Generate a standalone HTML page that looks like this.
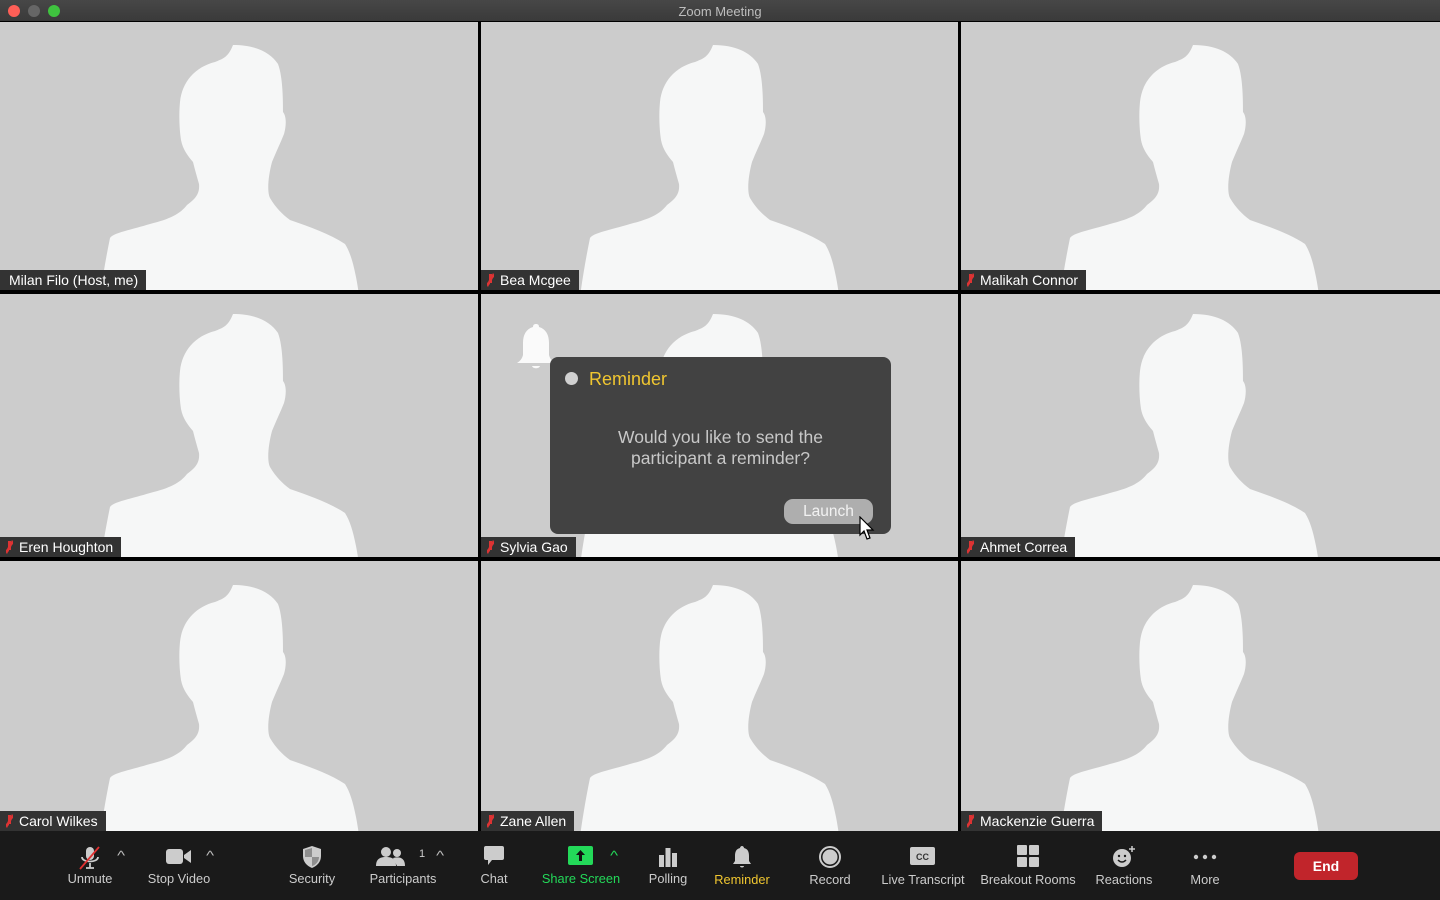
<!DOCTYPE html>
<html><head><meta charset="utf-8"><style>
*{margin:0;padding:0;box-sizing:border-box}
body{width:1440px;height:900px;background:#000;position:relative;overflow:hidden;font-family:"Liberation Sans",sans-serif}
.title{position:absolute;left:0;top:0;width:1440px;height:21px;background:linear-gradient(#474747,#3a3a3a);color:#bdbdbd;font-size:13px;text-align:center;line-height:23px}
.dot{position:absolute;top:5px;width:12px;height:12px;border-radius:50%}
.tile{position:absolute;background:#cccccc;overflow:hidden}
.tile svg{position:absolute;left:0;top:0}
.lab{position:absolute;left:0;bottom:0;height:20px;background:#333;color:#fff;font-size:14px;line-height:21px;padding:0 8px 0 9px;white-space:nowrap}
.lab.m{padding-left:19px}
.lab.m:before{content:"";position:absolute;left:6px;top:3px;width:7px;height:14px;background:linear-gradient(120deg,transparent 40%,#d33 40%,#d33 60%,transparent 60%),linear-gradient(#d33,#d33) 2px 1px/3px 9px no-repeat;border-radius:2px}
.bar{position:absolute;left:0;top:831px;width:1440px;height:69px;background:#1a1a1a}
.it{position:absolute;top:0;height:69px;text-align:center;color:#ccc;font-size:12.8px}
.it svg{position:absolute;top:14px;left:50%;transform:translateX(-50%)}
.it span{position:absolute;top:40px;left:50%;transform:translateX(-50%);white-space:nowrap}
.car{position:absolute;top:17px;color:#bbb;font-size:13px;transform:scaleX(1.3)}
</style></head><body>
<div class="title">Zoom Meeting
<div class="dot" style="left:8px;background:#fe5f57"></div>
<div class="dot" style="left:28px;background:#666"></div>
<div class="dot" style="left:48px;background:#3fc33f"></div>
</div>
<svg width="0" height="0" style="position:absolute"><defs><path id="sil" d="M233 23 C255 23 270 30 278 42 C283 55 283 80 283 90 C287 95 286 105 284 112 C280 122 276 130 272 140 C268 155 267 170 270 176 C276 186 282 192 290 198 C310 205 330 212 345 222 C350 230 353 240 356 255 C359 270 361 290 362 300 L97 300 C99 280 103 250 110 216 C113 211 130 208 150 202 C170 197 180 192 187 183 C195 177 200 172 199 162 C197 155 195 148 193 140 C188 134 183 128 181 118 C179 105 179 90 180 80 C182 60 195 45 215 40 C222 37 228 36 233 23 Z" fill="#f6f7f7"/></defs></svg>

<div class="tile" style="left:0;top:22px;width:478px;height:268px"><svg width="478" height="268"><use href="#sil"/></svg><div class="lab" style="padding-left:9px">Milan Filo (Host, me)</div></div>
<div class="tile" style="left:481px;top:22px;width:477px;height:268px"><svg width="477" height="268"><use href="#sil" x="-1"/></svg><div class="lab m">Bea Mcgee</div></div>
<div class="tile" style="left:961px;top:22px;width:479px;height:268px"><svg width="479" height="268"><use href="#sil" x="-1"/></svg><div class="lab m">Malikah Connor</div></div>

<div class="tile" style="left:0;top:294px;width:478px;height:263px"><svg width="478" height="263"><use href="#sil" y="-3"/></svg><div class="lab m">Eren Houghton</div></div>
<div class="tile" style="left:481px;top:294px;width:477px;height:263px"><svg width="477" height="263"><use href="#sil" x="-1" y="-3"/></svg><div class="lab m">Sylvia Gao</div></div>
<div class="tile" style="left:961px;top:294px;width:479px;height:263px"><svg width="479" height="263"><use href="#sil" x="-1" y="-3"/></svg><div class="lab m">Ahmet Correa</div></div>

<div class="tile" style="left:0;top:561px;width:478px;height:270px"><svg width="478" height="270"><use href="#sil" y="1"/></svg><div class="lab m">Carol Wilkes</div></div>
<div class="tile" style="left:481px;top:561px;width:477px;height:270px"><svg width="477" height="270"><use href="#sil" x="-1" y="1"/></svg><div class="lab m">Zane Allen</div></div>
<div class="tile" style="left:961px;top:561px;width:479px;height:270px"><svg width="479" height="270"><use href="#sil" x="-1" y="1"/></svg><div class="lab m">Mackenzie Guerra</div></div>

<svg style="position:absolute;left:516px;top:323px" width="40" height="48"><path d="M20 1 C22 1 23 2 23 4 C30 6 33 12 33 20 L33 32 C34 36 36 38 39 40 L1 40 C4 38 6 36 7 32 L7 20 C7 12 10 6 17 4 C17 2 18 1 20 1Z" fill="#fafafa"/><path d="M16 43 L24 43 C23 46 17 46 16 43Z" fill="#fafafa"/></svg>
<div style="position:absolute;left:550px;top:357px;width:341px;height:177px;background:#424242;border-radius:8px">
<div style="position:absolute;left:15px;top:15px;width:13px;height:13px;border-radius:50%;background:#d0d0d0"></div>
<div style="position:absolute;left:39px;top:12px;color:#f0c630;font-size:18px">Reminder</div>
<div style="position:absolute;left:0;width:341px;top:70px;text-align:center;color:#c8c8c8;font-size:17.5px;line-height:21px">Would you like to send the<br>participant a reminder?</div>
<div style="position:absolute;left:234px;top:142px;width:89px;height:25px;border-radius:9px;background:#aeaeae;color:#f2f2f2;font-size:15.5px;text-align:center;line-height:25px">Launch</div>
</div>
<svg style="position:absolute;left:859px;top:516px" width="18" height="26"><path d="M1 1 L1 19 L5 15 L8 23 L11 22 L8 14 L14 14 Z" fill="#fff" stroke="#000" stroke-width="1.2"/></svg>

<div class="bar">
<div class="it" style="left:60px;width:60px"><svg width="26" height="26" viewBox="0 0 26 26"><rect x="9" y="2" width="8" height="13" rx="4" fill="#ccc"/><path d="M5 12 C5 18 21 18 21 12 M13 18 V23 M9 23 H17" stroke="#ccc" stroke-width="1.8" fill="none"/><path d="M3 24 L22 2" stroke="#e03030" stroke-width="1.8"/></svg><span>Unmute</span></div>
<div class="car" style="left:118px">^</div>
<div class="it" style="left:144px;width:70px"><svg width="26" height="20" viewBox="0 0 26 20" style="top:16px"><rect x="0" y="2" width="17" height="15" rx="3" fill="#ccc"/><path d="M18 8 L25 3 V16 L18 11Z" fill="#ccc"/></svg><span>Stop Video</span></div>
<div class="car" style="left:207px">^</div>
<div class="it" style="left:282px;width:60px"><svg width="20" height="24" viewBox="0 0 20 24"><path d="M10 1 L19 4 V11 C19 17 15 21 10 23 C5 21 1 17 1 11 V4Z" fill="#ccc"/><path d="M10 3 V12 H3 V5Z M10 12 H17 C17 16 14 20 10 21Z" fill="#1a1a1a" opacity=".35"/></svg><span>Security</span></div>
<div class="it" style="left:365px;width:76px"><svg width="30" height="22" viewBox="0 0 30 22" style="left:26px;top:15px"><circle cx="10" cy="6" r="5" fill="#ccc"/><path d="M0 20 C0 13 4 11 10 11 C16 11 20 13 20 20Z" fill="#ccc"/><circle cx="21" cy="7" r="4" fill="#ccc"/><path d="M17 12 C25 10 29 13 29 20 H21Z" fill="#ccc"/></svg><span>Participants</span><div style="position:absolute;left:54px;top:17px;color:#ccc;font-size:11px">1</div></div>
<div class="car" style="left:437px">^</div>
<div class="it" style="left:470px;width:48px"><svg width="22" height="22" viewBox="0 0 22 22"><path d="M3 1 H19 Q21 1 21 3 V13 Q21 15 19 15 H9 L5 20 V15 H3 Q1 15 1 13 V3 Q1 1 3 1Z" fill="#ccc"/></svg><span>Chat</span></div>
<div class="it" style="left:540px;width:82px"><svg width="26" height="20" viewBox="0 0 26 20" style="top:15px;left:41px"><rect width="25" height="19" rx="2" fill="#23d959"/><path d="M12.5 4 L8 9 H11 V15 H14 V9 H17Z" fill="#111"/></svg><span style="color:#23d959">Share Screen</span></div>
<div class="car" style="left:611px;color:#23d959">^</div>
<div class="it" style="left:642px;width:52px"><svg width="20" height="20" viewBox="0 0 20 20" style="top:16px"><rect x="1" y="8" width="5" height="12" fill="#ccc"/><rect x="7.5" y="1" width="5" height="19" fill="#ccc"/><rect x="14" y="6" width="5" height="14" fill="#ccc"/></svg><span>Polling</span></div>
<div class="it" style="left:710px;width:64px"><svg width="20" height="24" viewBox="0 0 20 24"><path d="M10 1 C11 1 12 2 12 3 C16 4 17 7 17 11 V16 L19 19 H1 L3 16 V11 C3 7 4 4 8 3 C8 2 9 1 10 1Z" fill="#ccc"/><path d="M8 21 H12 C12 23 8 23 8 21Z" fill="#ccc"/></svg><span style="color:#f0c630;top:41px">Reminder</span></div>
<div class="it" style="left:800px;width:60px"><svg width="24" height="24" viewBox="0 0 24 24"><circle cx="12" cy="12" r="10" fill="none" stroke="#ccc" stroke-width="2"/><circle cx="12" cy="12" r="7.5" fill="#ccc"/></svg><span style="top:41px">Record</span></div>
<div class="it" style="left:878px;width:90px"><svg width="26" height="20" viewBox="0 0 26 20" style="top:16px"><rect width="25" height="18" rx="2" fill="#ccc"/><text x="12.5" y="13" font-size="9" font-weight="bold" text-anchor="middle" fill="#333" font-family="Liberation Sans">CC</text></svg><span style="top:41px">Live Transcript</span></div>
<div class="it" style="left:978px;width:100px"><svg width="22" height="22" viewBox="0 0 22 22"><rect x="0" y="0" width="10" height="10" rx="1" fill="#ccc"/><rect x="12" y="0" width="10" height="10" rx="1" fill="#ccc"/><rect x="0" y="12" width="10" height="10" rx="1" fill="#ccc"/><rect x="12" y="12" width="10" height="10" rx="1" fill="#ccc"/></svg><span style="top:41px">Breakout Rooms</span></div>
<div class="it" style="left:1094px;width:60px"><svg width="24" height="24" viewBox="0 0 24 24"><circle cx="10" cy="13" r="9" fill="#ccc"/><circle cx="7" cy="11" r="1.2" fill="#1a1a1a"/><circle cx="13" cy="11" r="1.2" fill="#1a1a1a"/><path d="M6 15 Q10 19 14 15" stroke="#1a1a1a" stroke-width="1.5" fill="none"/><path d="M20 1 V7 M17 4 H23" stroke="#ccc" stroke-width="1.5"/></svg><span style="top:41px">Reactions</span></div>
<div class="it" style="left:1180px;width:50px"><svg width="24" height="6" viewBox="0 0 24 6" style="top:23px"><circle cx="3" cy="3" r="2.2" fill="#ccc"/><circle cx="12" cy="3" r="2.2" fill="#ccc"/><circle cx="21" cy="3" r="2.2" fill="#ccc"/></svg><span style="top:41px">More</span></div>
<div style="position:absolute;left:1294px;top:21px;width:64px;height:28px;border-radius:6px;background:#c1252b;color:#fff;font-weight:bold;font-size:14px;text-align:center;line-height:28px">End</div>
</div>
</body></html>
